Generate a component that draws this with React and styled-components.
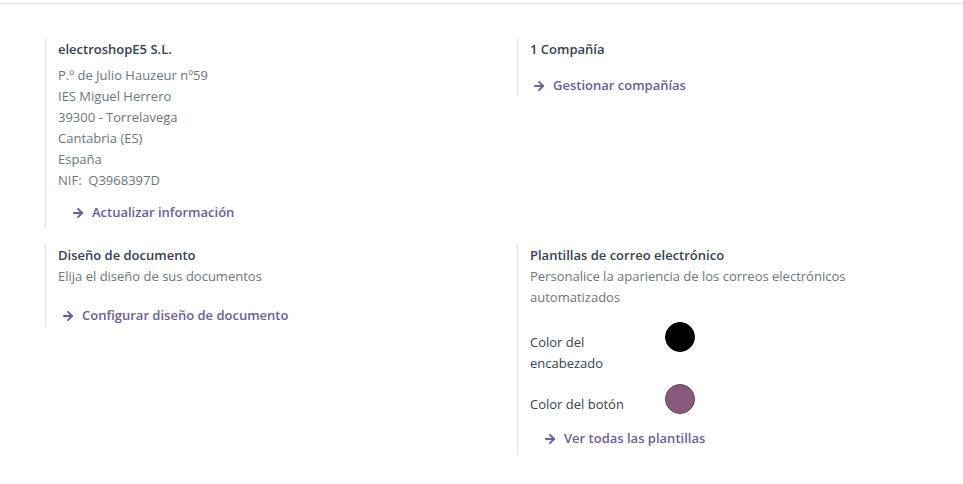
import React from 'react';
import styled, { createGlobalStyle } from 'styled-components';
import { ArrowRight } from 'lucide-react';

const GlobalStyle = createGlobalStyle`
  body {
    margin: 0;
    background: #fff;
    font-family: "Open Sans", "Liberation Sans", sans-serif;
    font-size: 13px;
    color: #374151;
  }
`;

const TopBar = styled.div`
  height: 3px;
  border-bottom: 1px solid #dcdcdc;
`;

const Grid = styled.div`
  display: grid;
  grid-template-columns: 472px 1fr;
  row-gap: 16px;
  align-items: start;
  padding: 34px 0 0 45px;
`;

const Box = styled.div`
  border-left: 1px solid #dee2e6;
  padding: 1px 60px ${p => p.$bottom || 0}px 12px;
  line-height: 21px;
`;

const Title = styled.div`
  font-weight: 600;
  color: #374151;
  margin-bottom: ${p => p.$gap || 0}px;
`;

const Muted = styled.div`
  color: #6c757d;
`;

const Link = styled.a`
  display: flex;
  align-items: center;
  gap: 7px;
  margin-top: ${p => p.$top}px;
  padding-left: ${p => p.$indent}px;
  color: #6b5e96;
  font-weight: 600;
  text-decoration: none;
  cursor: pointer;
`;

const ColorRow = styled.div`
  display: flex;
  align-items: flex-start;
  margin-top: ${p => p.$top}px;
`;

const ColorLabel = styled.div`
  width: 135px;
  padding-top: ${p => p.$pad}px;
  color: #374151;
`;

const Swatch = styled.span`
  width: 30px;
  height: 30px;
  border-radius: 50%;
  box-sizing: border-box;
  background: ${p => p.$color};
  border: 1px solid ${p => p.$border};
`;

const Action = ({ children, top, indent }) => (
  <Link $top={top} $indent={indent}>
    <ArrowRight size={14} strokeWidth={3.2} />
    {children}
  </Link>
);

export default function App() {
  return (
    <>
      <GlobalStyle />
      <TopBar />
      <Grid>
        <Box $bottom={5}>
          <Title $gap={5}>electroshopE5 S.L.</Title>
          <Muted>P.º de Julio Hauzeur nº59</Muted>
          <Muted>IES Miguel Herrero</Muted>
          <Muted>39300 - Torrelavega</Muted>
          <Muted>Cantabria (ES)</Muted>
          <Muted>España</Muted>
          <Muted>NIF:&nbsp; Q3968397D</Muted>
          <Action top={11} indent={13}>Actualizar información</Action>
        </Box>
        <Box>
          <Title>1 Compañía</Title>
          <Action top={15} indent={2}>Gestionar compañías</Action>
        </Box>
        <Box>
          <Title>Diseño de documento</Title>
          <Muted>Elija el diseño de sus documentos</Muted>
          <Action top={18} indent={3}>Configurar diseño de documento</Action>
        </Box>
        <Box $bottom={5}>
          <Title>Plantillas de correo electrónico</Title>
          <Muted>Personalice la apariencia de los correos electrónicos automatizados</Muted>
          <ColorRow $top={14}>
            <ColorLabel $pad={10}>Color del<br />encabezado</ColorLabel>
            <Swatch $color="#000" $border="#000" />
          </ColorRow>
          <ColorRow $top={10}>
            <ColorLabel $pad={10}>Color del botón</ColorLabel>
            <Swatch $color="#875a7b" $border="#5f3f57" />
          </ColorRow>
          <Action top={13} indent={13}>Ver todas las plantillas</Action>
        </Box>
      </Grid>
    </>
  );
}
